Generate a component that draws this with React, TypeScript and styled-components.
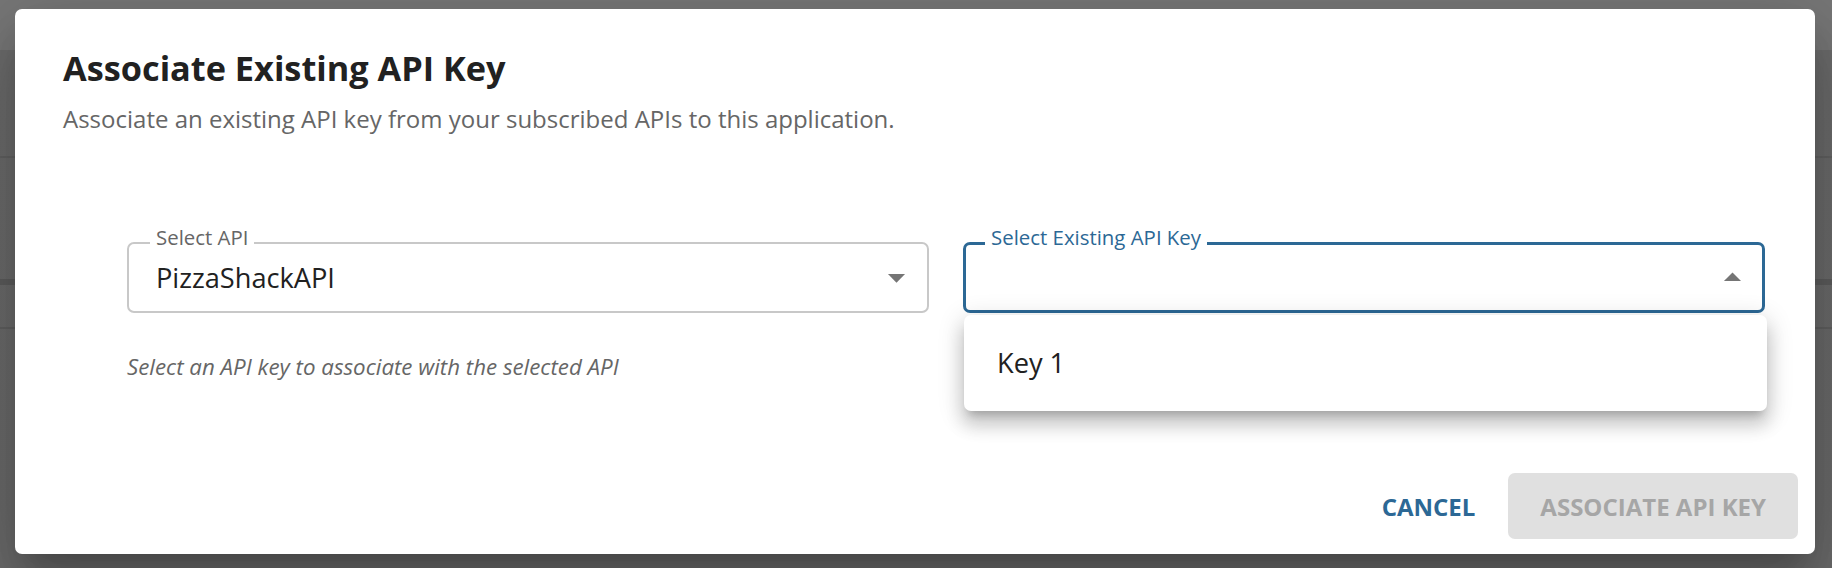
import React from "react";
import styled, { createGlobalStyle } from "styled-components";

const BLUE = "#2c6895";

const GlobalStyle = createGlobalStyle`
  html, body {
    margin: 0;
    padding: 0;
  }
  body {
    font-family: "Open Sans", "Liberation Sans", sans-serif;
    width: 1832px;
    height: 568px;
    overflow: hidden;
  }
  * { box-sizing: border-box; }
`;

const Backdrop = styled.div`
  width: 1832px;
  height: 568px;
  display: flex;
  align-items: flex-start;
  padding: 9px 0 0 15px;
  background:
    linear-gradient(to bottom, transparent 156px, #626262 156px, #626262 158px, transparent 158px),
    linear-gradient(to bottom, transparent 279px, #5d5d5d 279px, #5d5d5d 285px, transparent 285px),
    linear-gradient(to bottom, transparent 327px, #606060 327px, #606060 329px, transparent 329px),
    linear-gradient(to bottom, #777777 0, #777777 50px, #6c6c6c 50px, #6b6b6b 100%);
`;

const Dialog = styled.div`
  width: 1800px;
  height: 545px;
  background: #ffffff;
  border-radius: 7px;
  display: flex;
  flex-direction: column;
  box-shadow: 0 19px 26px -12px rgba(0, 0, 0, 0.2), 0 40px 64px 5px rgba(0, 0, 0, 0.14),
    0 15px 78px 14px rgba(0, 0, 0, 0.12);
`;

const Header = styled.div`
  padding: 39px 48px 0;
`;

const Title = styled.h2`
  margin: 0;
  font-size: 34.3px;
  line-height: 40px;
  font-weight: 700;
  color: #212121;
`;

const Subtitle = styled.p`
  margin: 15px 0 0;
  font-size: 24px;
  line-height: 32px;
  font-weight: 400;
  color: #666666;
`;

const Body = styled.div`
  padding: 107px 50px 0 112px;
  display: grid;
  grid-template-columns: 1fr 1fr;
  column-gap: 34px;
  align-items: start;
`;

const Column = styled.div`
  display: flex;
  flex-direction: column;
`;

const FieldBox = styled.div<{ $focused?: boolean }>`
  position: relative;
  height: 71px;
  border: ${(p) => (p.$focused ? `3px solid ${BLUE}` : "2px solid #c8c8c8")};
  border-radius: 7px;
  display: flex;
  align-items: center;
  padding-left: ${(p) => (p.$focused ? 26 : 27)}px;
  padding-right: ${(p) => (p.$focused ? 9 : 10)}px;
  background: #ffffff;
`;

const FieldLabel = styled.span<{ $focused?: boolean }>`
  position: absolute;
  top: ${(p) => (p.$focused ? -18 : -17)}px;
  left: ${(p) => (p.$focused ? 19 : 21)}px;
  padding: 0 6px;
  background: #ffffff;
  font-size: 20.4px;
  line-height: 20.4px;
  color: ${(p) => (p.$focused ? BLUE : "#666666")};
  white-space: nowrap;
`;

const FieldValue = styled.span`
  flex: 1;
  font-size: 27.2px;
  line-height: 40px;
  color: #212121;
`;

const ArrowIcon = styled.svg`
  width: 41px;
  height: 41px;
  flex: none;
  fill: #757575;
`;

const Helper = styled.p`
  margin: 40px 0 0;
  font-size: 22.3px;
  line-height: 28px;
  font-style: italic;
  color: #666666;
`;

const Menu = styled.ul`
  position: absolute;
  top: calc(100% + 5px);
  left: -2px;
  right: -5px;
  margin: 0;
  padding: 14px 0;
  list-style: none;
  background: #ffffff;
  border-radius: 7px;
  z-index: 2;
  box-shadow: 0 8px 9px -5px rgba(0, 0, 0, 0.2), 0 14px 17px 2px rgba(0, 0, 0, 0.14),
    0 5px 24px 4px rgba(0, 0, 0, 0.12);
`;

const MenuItem = styled.li`
  height: 68px;
  line-height: 68px;
  padding: 0 33px;
  font-size: 27.2px;
  color: #212121;
`;

const Actions = styled.div`
  margin-top: auto;
  display: flex;
  justify-content: flex-end;
  align-items: center;
  gap: 17px;
  padding: 0 17px 15px;
`;

const TextButton = styled.button`
  height: 66px;
  padding: 0 16px;
  border: 0;
  background: transparent;
  font-family: inherit;
  font-size: 24px;
  font-weight: 700;
  letter-spacing: 0;
  text-transform: uppercase;
  color: ${BLUE};
  cursor: pointer;
`;

const ContainedButton = styled.button`
  height: 66px;
  padding: 0 32px;
  border: 0;
  border-radius: 7px;
  background: #e0e0e0;
  font-family: inherit;
  font-size: 24px;
  font-weight: 700;
  letter-spacing: 0;
  text-transform: uppercase;
  color: #a6a6a6;
`;

function Arrow({ up }: { up?: boolean }) {
  return (
    <ArrowIcon viewBox="0 0 24 24">
      <path d={up ? "M7 14l5-5 5 5z" : "M7 10l5 5 5-5z"} />
    </ArrowIcon>
  );
}

export default function App() {
  return (
    <>
      <GlobalStyle />
      <Backdrop>
        <Dialog role="dialog">
          <Header>
            <Title>Associate Existing API Key</Title>
            <Subtitle>Associate an existing API key from your subscribed APIs to this application.</Subtitle>
          </Header>
          <Body>
            <Column>
              <FieldBox>
                <FieldLabel>Select API</FieldLabel>
                <FieldValue>PizzaShackAPI</FieldValue>
                <Arrow />
              </FieldBox>
              <Helper>Select an API key to associate with the selected API</Helper>
            </Column>
            <Column>
              <FieldBox $focused>
                <FieldLabel $focused>Select Existing API Key</FieldLabel>
                <FieldValue />
                <Arrow up />
                <Menu>
                  <MenuItem>Key 1</MenuItem>
                </Menu>
              </FieldBox>
            </Column>
          </Body>
          <Actions>
            <TextButton>Cancel</TextButton>
            <ContainedButton disabled>Associate API Key</ContainedButton>
          </Actions>
        </Dialog>
      </Backdrop>
    </>
  );
}
